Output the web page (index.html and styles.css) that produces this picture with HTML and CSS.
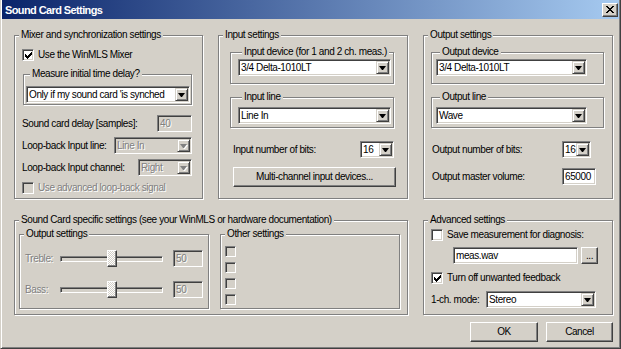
FILE: index.html
```html
<!DOCTYPE html>
<html lang="en">
<head>
  <meta charset="UTF-8" />
  <title>Sound Card Settings</title>
  <link rel="stylesheet" href="styles.css">
</head>
<body>
  <div class="window">

    <!-- Title bar -->
    <div class="titlebar">
      <span class="title">Sound Card Settings</span>
      <span class="close-btn">
        <svg width="8" height="7" viewBox="0 0 8 7" shape-rendering="crispEdges"><path d="M0 0h2v1H0z M6 0h2v1H6z M1 1h2v1H1z M5 1h2v1H5z M2 2h4v1H2z M3 3h2v1H3z M2 4h4v1H2z M1 5h2v1H1z M5 5h2v1H5z M0 6h2v1H0z M6 6h2v1H6z" fill="#000"/></svg>
      </span>
    </div>

    <div class="dialog">
      <div class="groups">

        <!-- Mixer -->
        <fieldset class="group">
          <legend>Mixer and synchronization settings</legend>
          <div class="mixer-body">
            <div class="check-row mix-check">
              <span class="cb"><svg width="7" height="7" viewBox="0 0 7 7" shape-rendering="crispEdges"><path d="M6 0h1v1h-1z M5 1h2v1h-2z M0 2h1v1H0z M4 2h3v1H4z M0 3h2v1H0z M3 3h3v1H3z M0 4h5v1H0z M1 5h3v1H1z M2 6h1v1H2z" fill="#000"/></svg></span>
              <span>Use the WinMLS Mixer</span>
            </div>
            <fieldset class="group delay-group">
              <legend>Measure initial time delay?</legend>
              <div class="combo delay-combo"><span class="value">Only if my sound card 'is synched</span><span class="arrow"></span></div>
            </fieldset>
            <div class="row delay-row">
              <span>Sound card delay [samples]:</span>
              <span class="field off delay-field">40</span>
            </div>
            <div class="row loop-row">
              <span>Loop-back Input line:</span>
              <div class="combo off loop-combo"><span class="value">Line In</span><span class="arrow"></span></div>
            </div>
            <div class="row loop-row">
              <span>Loop-back Input channel:</span>
              <div class="combo off chan-combo"><span class="value">Right</span><span class="arrow"></span></div>
            </div>
            <div class="check-row adv-loop">
              <span class="cb off"></span>
              <span class="dis">Use advanced loop-back signal</span>
            </div>
          </div>
        </fieldset>

        <!-- Input -->
        <fieldset class="group">
          <legend>Input settings</legend>
          <div class="io-body input-body">
            <fieldset class="group sub first-sub in-sub">
              <legend>Input device (for 1 and 2 ch. meas.)</legend>
              <div class="combo"><span class="value">3/4 Delta-1010LT</span><span class="arrow"></span></div>
            </fieldset>
            <fieldset class="group sub second-sub in-sub">
              <legend>Input line</legend>
              <div class="combo"><span class="value">Line In</span><span class="arrow"></span></div>
            </fieldset>
            <div class="row bits-row in-bits">
              <span class="bits-label">Input number of bits:</span>
              <div class="combo bits-combo"><span class="value">16</span><span class="arrow"></span></div>
            </div>
            <button class="btn multi-btn">Multi-channel input devices...</button>
          </div>
        </fieldset>

        <!-- Output -->
        <fieldset class="group">
          <legend>Output settings</legend>
          <div class="io-body output-body">
            <fieldset class="group sub first-sub out-sub">
              <legend>Output device</legend>
              <div class="combo"><span class="value">3/4 Delta-1010LT</span><span class="arrow"></span></div>
            </fieldset>
            <fieldset class="group sub second-sub out-sub">
              <legend>Output line</legend>
              <div class="combo"><span class="value">Wave</span><span class="arrow"></span></div>
            </fieldset>
            <div class="row bits-row out-bits">
              <span class="bits-label">Output number of bits:</span>
              <div class="combo out-bits-combo"><span class="value">16</span><span class="arrow"></span></div>
            </div>
            <div class="row volume-row">
              <span>Output master volume:</span>
              <span class="field volume-field">65000</span>
            </div>
          </div>
        </fieldset>

        <!-- Sound card specific -->
        <fieldset class="group sound-card">
          <legend>Sound Card specific settings (see your WinMLS or hardware documentation)</legend>
          <div class="sc-body">
            <fieldset class="group tone-group">
              <legend>Output settings</legend>
              <div class="tone-body">
                <div class="tone-row treble-row">
                  <span class="tone-label dis">Treble:</span>
                  <div class="slider"><span class="thumb" style="margin-left: 47px"></span></div>
                  <span class="field off tone-field">50</span>
                </div>
                <div class="tone-row bass-row">
                  <span class="tone-label dis">Bass:</span>
                  <div class="slider"><span class="thumb" style="margin-left: 47px"></span></div>
                  <span class="field off tone-field">50</span>
                </div>
              </div>
            </fieldset>
            <fieldset class="group other-group">
              <legend>Other settings</legend>
              <div class="other-body">
                <span class="cb small off"></span>
                <span class="cb small off"></span>
                <span class="cb small off"></span>
                <span class="cb small off"></span>
              </div>
            </fieldset>
          </div>
        </fieldset>

        <!-- Advanced -->
        <fieldset class="group">
          <legend>Advanced settings</legend>
          <div class="adv-body">
            <div class="check-row save-check">
              <span class="cb"></span>
              <span>Save measurement for diagnosis:</span>
            </div>
            <div class="file-row">
              <span class="field file-field">meas.wav</span>
              <button class="btn browse-btn">...</button>
            </div>
            <div class="check-row feedback-check">
              <span class="cb"><svg width="7" height="7" viewBox="0 0 7 7" shape-rendering="crispEdges"><path d="M6 0h1v1h-1z M5 1h2v1h-2z M0 2h1v1H0z M4 2h3v1H4z M0 3h2v1H0z M3 3h3v1H3z M0 4h5v1H0z M1 5h3v1H1z M2 6h1v1H2z" fill="#000"/></svg></span>
              <span>Turn off unwanted feedback</span>
            </div>
            <div class="mode-row">
              <span class="mode-label">1-ch. mode:</span>
              <div class="combo mode-combo"><span class="value">Stereo</span><span class="arrow"></span></div>
            </div>
          </div>
        </fieldset>
      </div>

      <div class="actions">
        <button class="btn ok-btn">OK</button>
        <button class="btn cancel-btn">Cancel</button>
      </div>
    </div>
  </div>
</body>
</html>
```

FILE: styles.css
```css
* {
  box-sizing: border-box;
}

body {
  margin: 0;
  background-color: #d4d0c8;
  font-family: 'Liberation Sans', Arial, sans-serif;
  font-size: 10px;
  line-height: 12px;
  letter-spacing: -0.4px;
  color: #000;
}

.window {
  width: 621px;
  height: 349px;
  border: 1px solid;
  border-top: 0;
  border-color: #d4d0c8 #404040 #404040 #d4d0c8;
  box-shadow: inset 1px 0 0 #fff, inset -1px -1px 0 #808080;
  padding: 0 1px;
}

.titlebar {
  height: 19px;
  display: flex;
  align-items: center;
  justify-content: space-between;
  padding: 0 1px 0 3px;
  background: linear-gradient(to right, #0a246a, #a6caf0);
}

.title {
  color: #fff;
  font-weight: bold;
  font-size: 11px;
  letter-spacing: -0.6px;
}

.close-btn {
  width: 16px;
  height: 14px;
  display: flex;
  align-items: center;
  justify-content: center;
  background: #d4d0c8;
  border: 1px solid;
  border-color: #fff #404040 #404040 #fff;
  box-shadow: inset -1px -1px 0 #808080;
}

.dialog {
  padding: 10px 6px 0 12px;
}

.groups {
  display: grid;
  grid-template-columns: 189px 190px 190px;
  grid-template-rows: 170px 101px;
  gap: 15px;
}

/* etched group boxes */
.group {
  margin: 0;
  padding: 0;
  min-width: 0;
  border: 1px solid #808080;
  box-shadow: inset 1px 1px 0 #fff, 1px 1px 0 #fff;
}

.group > legend {
  margin-left: 4px;
  padding: 0 2px;
  height: 12px;
  line-height: 12px;
  background: #d4d0c8;
  white-space: nowrap;
}

.row {
  display: flex;
  align-items: center;
  justify-content: space-between;
}

.check-row {
  display: flex;
  align-items: center;
  gap: 4px;
  height: 12px;
}

.dis {
  color: #808080;
  text-shadow: 1px 1px 0 #fff;
}

/* sunken controls */
.field, .combo, .cb {
  border: 1px solid;
  border-color: #808080 #fff #fff #808080;
  box-shadow: inset 1px 1px 0 #404040, inset -1px -1px 0 #d4d0c8;
  background: #fff;
}

.field {
  display: block;
  height: 17px;
  padding: 0 2px;
  line-height: 15px;
  white-space: nowrap;
}

.field.off {
  background: #d4d0c8;
  color: #808080;
  text-shadow: 1px 1px 0 #fff;
}

.combo {
  display: flex;
  height: 17px;
  padding: 1px;
}

.combo .value {
  flex: 1;
  min-width: 0;
  padding-left: 1px;
  line-height: 13px;
  white-space: nowrap;
  overflow: hidden;
}

.combo .arrow {
  width: 13px;
  flex: none;
  display: flex;
  align-items: center;
  justify-content: center;
  background: #d4d0c8;
  border: 1px solid;
  border-color: #d4d0c8 #404040 #404040 #d4d0c8;
  box-shadow: inset 1px 1px 0 #fff, inset -1px -1px 0 #808080;
}

.combo .arrow::after {
  content: "";
  box-sizing: content-box;
  width: 1px;
  height: 0;
  border-left: 3px solid transparent;
  border-right: 3px solid transparent;
  border-top: 4px solid #000;
}

.combo.off {
  background: #d4d0c8;
}

.combo.off .value {
  color: #808080;
  text-shadow: 1px 1px 0 #fff;
}

.combo.off .arrow::after {
  border-top-color: #808080;
  filter: drop-shadow(1px 1px 0 #fff);
}

.cb {
  width: 12px;
  height: 12px;
  flex: none;
  display: inline-flex;
  align-items: center;
  justify-content: center;
}

.cb.off {
  background: #d4d0c8;
}

.cb.small {
  width: 11px;
  height: 11px;
}

/* raised buttons */
.btn {
  margin: 0;
  padding: 0;
  font: inherit;
  letter-spacing: inherit;
  color: #000;
  background: #d4d0c8;
  border: 1px solid;
  border-color: #fff #404040 #404040 #fff;
  box-shadow: inset -1px -1px 0 #808080;
}

/* mixer */
.mixer-body {
  padding: 0 10px 0 7px;
}

.mix-check {
  margin-top: 8px;
}

.delay-group {
  margin: 7px 0 0 1px;
  padding: 0 1px 1px 2px;
}

.delay-combo {
  margin-top: 6px;
}

.delay-row {
  margin-top: 10px;
}

.delay-field {
  width: 35px;
}

.loop-row {
  margin-top: 5px;
}

.loop-combo {
  width: 78px;
}

.chan-combo {
  width: 54px;
}

.adv-loop {
  margin-top: 6px;
}

/* input / output */
.input-body {
  padding: 0 13px 0 11px;
}

.output-body {
  padding: 0 8px 0 7px;
}

.first-sub {
  margin-top: 5px;
}

.first-sub .combo {
  margin-top: 1px;
}

.second-sub {
  margin-top: 7px;
}

.second-sub .combo {
  margin-top: 4px;
}

.in-sub {
  padding: 0 2px 7px 7px;
}

.in-sub.second-sub {
  padding-bottom: 3px;
}

.out-sub {
  padding: 0 16px 7px 4px;
}

.out-sub.second-sub {
  padding-bottom: 3px;
}

.bits-row {
  margin-top: 13px;
}

.in-bits {
  padding-left: 3px;
}

.out-bits {
  padding-left: 1px;
}

.bits-combo {
  width: 34px;
}

.out-bits-combo {
  width: 29px;
  margin-right: 13px;
}

.multi-btn {
  display: block;
  width: 163px;
  height: 20px;
  margin: 9px 0 0 3px;
}

.volume-row {
  margin-top: 10px;
  padding-left: 1px;
}

.volume-field {
  width: 34px;
  margin-right: 8px;
}

/* sound card specific */
.sound-card {
  grid-column: 1 / 3;
}

.sc-body {
  display: flex;
  gap: 11px;
  margin-top: 2px;
  padding: 0 7px 0 4px;
}

.tone-group {
  width: 190px;
  height: 81px;
}

.other-group {
  flex: 1;
  height: 81px;
}

.tone-body {
  padding-left: 5px;
}

.tone-row {
  display: flex;
  align-items: center;
  height: 17px;
}

.treble-row {
  margin-top: 10px;
}

.bass-row {
  margin-top: 14px;
}

.tone-label {
  width: 35px;
}

.slider {
  position: relative;
  width: 103px;
  height: 17px;
  display: flex;
}

.slider::before {
  content: "";
  position: absolute;
  left: 0;
  right: 0;
  top: 6px;
  height: 4px;
  border: 1px solid;
  border-color: #808080 #fff #fff #808080;
  box-shadow: inset 1px 1px 0 #404040;
}

.thumb {
  position: relative;
  width: 10px;
  height: 17px;
  border: 1px solid;
  border-color: #fff #404040 #404040 #fff;
  box-shadow: inset -1px -1px 0 #808080;
  background-color: #d4d0c8;
  background-image: repeating-conic-gradient(#fff 0 25%, #d4d0c8 0 50%);
  background-size: 2px 2px;
}

.tone-field {
  width: 30px;
  margin-left: 10px;
}

.other-body {
  display: flex;
  flex-direction: column;
  gap: 5px;
  margin-top: 6px;
  padding-left: 4px;
}

/* advanced */
.adv-body {
  padding: 0 8px 0 7px;
}

.save-check {
  margin-top: 3px;
}

.file-row {
  display: flex;
  margin-top: 6px;
  padding-left: 22px;
}

.file-field {
  width: 125px;
}

.browse-btn {
  width: 17px;
  height: 17px;
  margin-left: 3px;
  line-height: 12px;
}

.feedback-check {
  margin-top: 8px;
}

.mode-row {
  display: flex;
  align-items: center;
  margin-top: 7px;
}

.mode-label {
  width: 55px;
}

.mode-combo {
  width: 110px;
}

/* dialog buttons */
.actions {
  display: flex;
  justify-content: flex-end;
  gap: 8px;
  margin-top: 7px;
}

.ok-btn {
  width: 68px;
  height: 20px;
}

.cancel-btn {
  width: 67px;
  height: 20px;
}
```
